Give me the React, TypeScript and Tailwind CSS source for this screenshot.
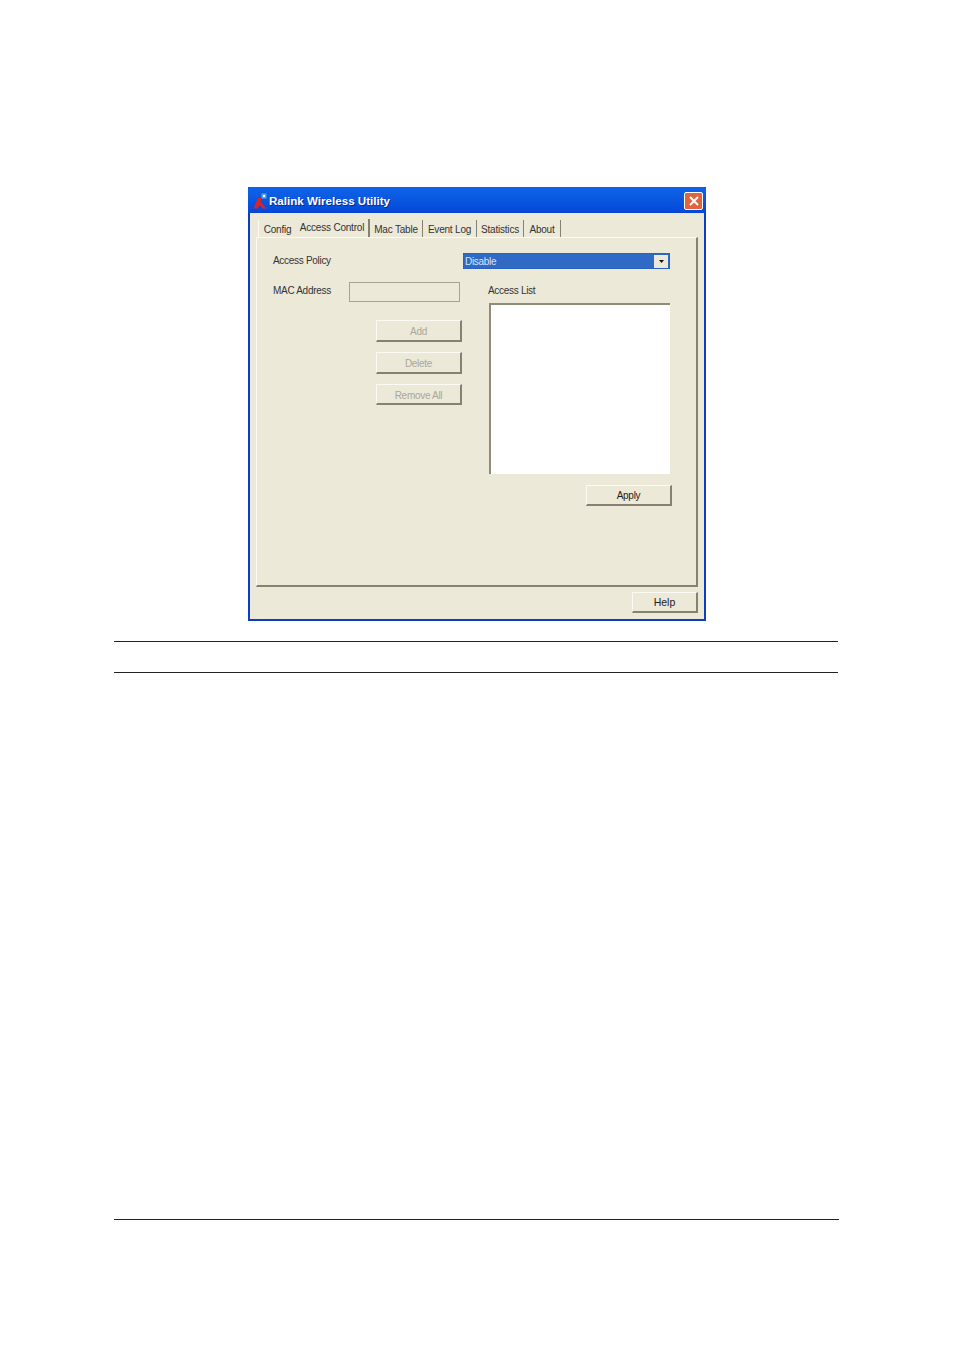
import React from 'react';

const tabs = [
  { label: 'Mac Table', w: 'w-[53px]' },
  { label: 'Event Log', w: 'w-[54px]' },
  { label: 'Statistics', w: 'w-[47px]' },
  { label: 'About', w: 'w-[37px]' },
];

function WinButton({ label, disabled, className }: { label: string; disabled?: boolean; className: string }) {
  return (
    <div
      className={`flex items-center justify-center whitespace-nowrap border-t border-l border-t-[#fbfaf5] border-l-[#fbfaf5] border-r-2 border-b-2 border-r-[#85836f] border-b-[#85836f] bg-[#ece9d8] pt-[1px] ${
        disabled ? 'text-[#a9a798]' : 'text-[#222]'
      } ${className}`}
    >
      {label}
    </div>
  );
}

export default function App() {
  return (
    <div className="h-[1350px] w-[954px] overflow-hidden bg-white pt-[187px] font-['Liberation_Sans',sans-serif]">
      {/* utility window */}
      <div className="ml-[248px] flex h-[434px] w-[458px] flex-col border-x-[2px] border-b-[2px] border-[#0a3fc4] bg-[#ece9d8]">
        <div className="-mx-[2px] flex h-[26px] shrink-0 items-center rounded-t-[2px] bg-gradient-to-b from-[#0f63ea] via-[#0a57e0] to-[#0546d8] pl-[5px] pr-[3px] pt-[2px]">
          <svg width="16" height="17" viewBox="0 0 16 17" className="shrink-0">
            <path d="M0.5 15.5 L5 5 L8 5 L8 9.5 L13.5 15.5 L9.5 15.5 L7 12 L4.5 15.5 Z" fill="#d8252b" />
            <rect x="8.5" y="0.5" width="5" height="5" fill="#5aa8ef" />
            <rect x="10" y="2" width="2" height="2" fill="#fff" />
          </svg>
          <span className="text-[11.6px] font-bold text-white [text-shadow:1px_1px_0_#0a2a90]">Ralink Wireless Utility</span>
          <div className="ml-auto flex h-[18px] w-[19px] items-center justify-center rounded-[2px] border border-white bg-[#e2633f]">
            <svg width="12" height="12" viewBox="0 0 12 12">
              <path d="M2 2 L10 10 M10 2 L2 10" stroke="#fff" strokeWidth="2" />
            </svg>
          </div>
        </div>

        {/* tab strip */}
        <div className="flex h-[24px] shrink-0 items-end whitespace-nowrap pl-[8px] text-[10px] tracking-[-0.2px] text-[#333]">
          <div className="flex h-[17px] w-[38px] items-center justify-center border-l border-[#fbfaf5] pt-[2px]">Config</div>
          <div className="mb-[-1px] flex h-[19px] w-[74px] items-start justify-center border-r-2 border-[#85836f] pt-[1px]">Access Control</div>
          {tabs.map((t) => (
            <div key={t.label} className={`flex h-[17px] items-center justify-center border-r border-[#85836f] pt-[2px] ${t.w}`}>
              {t.label}
            </div>
          ))}
        </div>

        {/* page */}
        <div className="ml-[6px] flex h-[350px] w-[442px] shrink-0 flex-col border-t border-l border-t-[#fbfaf5] border-l-[#fbfaf5] border-r-2 border-b-2 border-r-[#85836f] border-b-[#85836f] pl-[16px] text-[10px] tracking-[-0.3px] text-[#333]">
          <div className="mt-[15px] flex h-[16px] items-center">
            <span className="w-[190px] pb-[2px]">Access Policy</span>
            <div className="flex h-[16px] w-[207px] items-center border border-dotted border-[#555] bg-[#316ac5] pr-[1px] text-[#d8e4f8]">
              <span className="flex-1 pl-[1px] pt-[1px] leading-[12px]">Disable</span>
              <div className="flex h-[13px] w-[14px] items-center justify-center bg-[#ece9d8]">
                <svg width="5" height="3" viewBox="0 0 5 3">
                  <path d="M0 0 L5 0 L2.5 3 Z" fill="#111" />
                </svg>
              </div>
            </div>
          </div>

          <div className="mt-[13px] flex">
            <div className="w-[215px]">
              <div className="flex h-[20px] items-center">
                <span className="w-[76px] pb-[4px]">MAC Address</span>
                <div className="h-[20px] w-[111px] border border-[#a5a393] bg-[#ece9d8]" />
              </div>
              <div className="ml-[103px] mt-[18px] flex w-[86px] flex-col gap-[10px]">
                <WinButton label="Add" disabled className="h-[22px] w-[86px]" />
                <WinButton label="Delete" disabled className="h-[22px] w-[86px]" />
                <WinButton label="Remove All" disabled className="h-[21px] w-[86px] pt-[2px]" />
              </div>
            </div>
            <div className="flex w-[184px] flex-col">
              <div className="flex h-[16px] items-center">Access List</div>
              <div className="ml-[1px] mt-[5px] h-[171px] w-[181px] border-t-2 border-l-2 border-[#8e8c7a] bg-white" />
              <WinButton label="Apply" className="ml-[98px] mt-[11px] h-[21px] w-[86px]" />
            </div>
          </div>
        </div>

        <div className="mt-[5px] flex justify-end pr-[6px]">
          <WinButton label="Help" className="h-[21px] w-[66px] text-[10.5px]" />
        </div>
      </div>

      {/* caption rules */}
      <div className="ml-[114px] mt-[20px] h-[32px] w-[724px] border-y border-[#222]" />
      <div className="ml-[114px] mt-[546px] w-[725px] border-t border-[#222]" />
    </div>
  );
}
